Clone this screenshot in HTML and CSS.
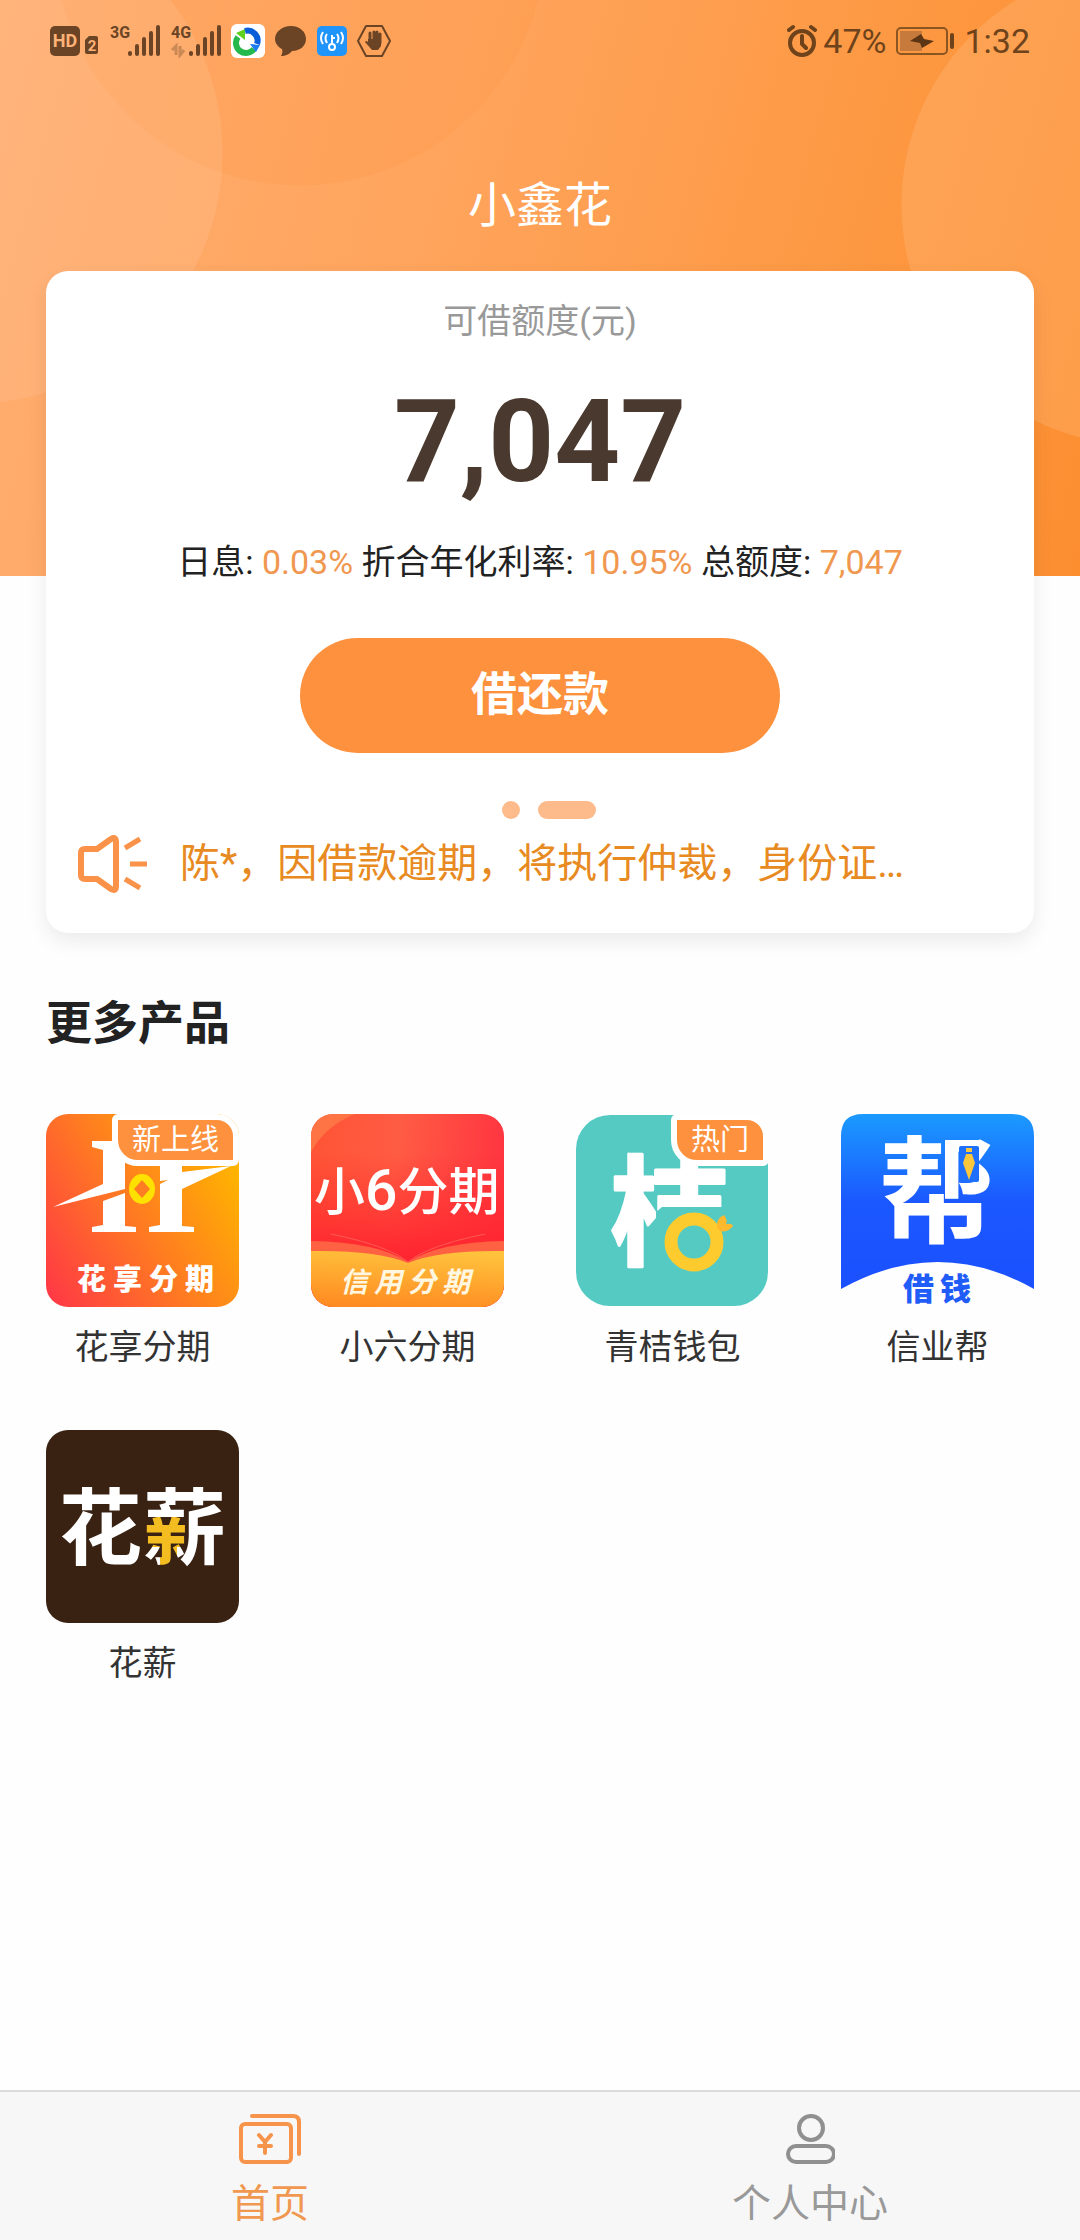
FILE: index.html
```html
<!DOCTYPE html>
<html lang="zh-CN">
<head>
<meta charset="utf-8">
<meta name="viewport" content="width=device-width, initial-scale=1">
<title>小鑫花</title>
<link rel="stylesheet" href="styles.css">
</head>
<body>
<div class="page">
  <div class="status">
    <div class="status-group">
      <svg width="50" height="34" viewBox="0 0 50 34" fill="#6a4424">
        <rect x="0" y="2" width="30" height="30" rx="5"/>
        <text class="glyph-bold" x="15" y="23" font-size="18" text-anchor="middle" fill="#ffb277">HD</text>
        <path d="M39 12h7q2 0 2 2v14q0 2-2 2H37q-2 0-2-2V16z"/>
        <text class="glyph-bold" x="42" y="27" font-size="15" text-anchor="middle" fill="#ffb277">2</text>
      </svg>
      <svg width="51" height="34" viewBox="0 0 51 34" fill="#6a4424" stroke="#6a4424">
        <text class="glyph-bold" x="0" y="14" font-size="16" stroke="none">3G</text>
        <path d="M20 29v1M27 22v8M34 15v15M41 9v21M48 3v27" stroke-width="4" stroke-linecap="round"/>
      </svg>
      <svg width="50" height="34" viewBox="0 0 50 34" fill="#6a4424" stroke="#6a4424">
        <text class="glyph-bold" x="0" y="14" font-size="16" stroke="none">4G</text>
        <path d="M20 29v1M27 22v8M34 15v15M41 9v21M48 3v27" stroke-width="4" stroke-linecap="round"/>
        <path d="M1 26l4-4v9M9 22v9l4-5" fill="none" stroke-width="3" opacity=".35"/>
      </svg>
      <svg width="34" height="34" viewBox="0 0 34 34">
        <rect width="34" height="34" rx="6" fill="#fff"/>
        <path d="M7 13a10 10 0 0 0 16 12" fill="none" stroke="#25b84c" stroke-width="6"/>
        <path d="M5 9l9-4v11z" fill="#5fd01e"/>
        <path d="M14 7a10 10 0 0 1 12 13" fill="none" stroke="#0a5fd8" stroke-width="6"/>
        <path d="M19 20l10 1-4 7z" fill="#1b7cf0"/>
      </svg>
      <svg width="32" height="34" viewBox="0 0 32 34">
        <path d="M16 2c9 0 15 6 15 13s-6 12-14 12c-2 3-7 5-11 5 1-2 2-4 1-7C3 23 0 19 0 15 0 8 7 2 16 2z" fill="#6a4424"/>
      </svg>
      <svg width="30" height="34" viewBox="0 0 30 34" fill="none" stroke="#fff" stroke-width="2">
        <rect y="2" width="30" height="30" rx="5" fill="#1f94fb" stroke="none"/>
        <circle cx="15" cy="23" r="3"/><path d="M15 20v-9M15 14h3M10 10q-3 4 0 9M20 10q3 4 0 9M6 8q-4 6 0 12M24 8q4 6 0 12"/>
      </svg>
      <svg width="34" height="34" viewBox="0 0 34 34" stroke="#6a4424" fill="none">
        <path d="M9 2h16l8 15-8 15H9L1 17z" stroke-width="2" stroke-linejoin="round"/>
        <path d="M13 18V9M17 18V8M20 18V8M23 19v-9" stroke-width="3" stroke-linecap="round"/>
        <path d="M11 15h13v7l-3 4h-6l-7-8q1-2 3 0z" fill="#6a4424" stroke="none"/>
      </svg>
    </div>
    <div class="status-group status-right">
      <svg width="30" height="34" viewBox="0 0 30 34" fill="none" stroke="#6e431b" stroke-width="4" stroke-linecap="round">
        <circle cx="15" cy="19" r="12"/><path d="M15 12v8l4 4M2 6l4-3M28 6l-4-3"/>
      </svg>
      <span>47%</span>
      <svg class="battery" width="58" height="34" viewBox="0 0 58 34" fill="none" stroke="#8a5520" stroke-width="2">
        <rect x="1" y="4" width="50" height="26" rx="4"/>
        <rect x="4" y="7" width="22" height="20" fill="#c67a3c" stroke="none"/>
        <path d="M14 17l11-7 3 5 10 2-12 7-2-5z" fill="#5c3515" stroke="none"/>
        <path d="M56 11v12" stroke="#6e431b" stroke-width="4" stroke-linecap="round"/>
      </svg>
      <span>1:32</span>
    </div>
  </div>

  <h1 class="title">小鑫花</h1>

  <main class="content">
    <section class="card">
      <p class="quota-label">可借额度(元)</p>
      <p class="quota">7,047</p>
      <p class="rates">日息: <em>0.03%</em> 折合年化利率: <em>10.95%</em> 总额度: <em>7,047</em></p>
      <button class="loan" type="button">借还款</button>
      <div class="dots"><i class="dot"></i><i class="dot dot-wide"></i></div>
      <div class="notice">
        <svg width="70" height="60" viewBox="0 0 70 60" fill="none" stroke="#fa9249" stroke-width="6">
          <path d="M7 15h12L33 5q5-3 5 3v44q0 6-5 3L19 45H7q-4 0-4-4V19q0-4 4-4z" stroke-linejoin="round"/>
          <path d="M47 14l15-9M52 30h17M47 45l15 9" stroke-width="5"/>
        </svg>
        <p>陈*，因借款逾期，将执行仲裁，身份证…</p>
      </div>
    </section>

    <h2 class="section-title">更多产品</h2>

    <div class="products">
      <a class="product" href="#huaxiang">
        <span class="logo">
          <svg viewBox="0 0 193 193">
            <defs>
              <linearGradient id="g1" x1="0" y1=".9" x2="1" y2=".3"><stop offset="0" stop-color="#ff3a44"/><stop offset=".5" stop-color="#ff7a22"/><stop offset="1" stop-color="#ffb400"/></linearGradient>
            </defs>
            <rect width="193" height="193" rx="22" fill="url(#g1)"/>
            <g fill="#fff">
              <path d="M46 27h33v48L7 93l50-23V36l-11-3z"/>
              <path d="M57 87l22-8v33l11 1v5H46v-5l11-2z"/>
              <path d="M114 27h34v6l-12 4v21l49-6-49 23v37l12 1v5h-45v-5l11-2V70l8-4-8 1z"/>
            </g>
            <ellipse cx="96" cy="75" rx="13" ry="15" fill="#ffe100"/>
            <path d="M96 66l8 9-8 9-8-9z" fill="#ff7d22"/>
            <text class="glyph-black" font-size="29" x="31 67 103 139" y="176" fill="#fff">花享分期</text>
          </svg>
          <b class="badge">新上线</b>
        </span>
        <span class="name">花享分期</span>
      </a>
      <a class="product" href="#xiaoliu">
        <span class="logo">
          <svg viewBox="0 0 193 193">
            <defs>
              <linearGradient id="g2" x1="0" y1=".1" x2="1" y2=".2"><stop offset="0" stop-color="#ff5435"/><stop offset=".45" stop-color="#ff5c44"/><stop offset="1" stop-color="#ff3540"/></linearGradient>
              <linearGradient id="g2s" x1="0" y1="0" x2="0" y2="1"><stop offset=".2" stop-color="#ff2a2a" stop-opacity="0"/><stop offset=".75" stop-color="#ff2430"/></linearGradient>
              <linearGradient id="g2b" x1=".6" y1="0" x2=".4" y2="1"><stop offset="0" stop-color="#ffc23c"/><stop offset="1" stop-color="#ff8c22"/></linearGradient>
              <clipPath id="c2"><rect width="193" height="193" rx="22"/></clipPath>
            </defs>
            <g clip-path="url(#c2)">
              <rect width="193" height="193" fill="url(#g2)"/>
              <rect width="193" height="193" fill="url(#g2s)"/>
              <path d="M0 38Q14 12 44 0H0z" fill="#ff7444"/>
              <path d="M0 127Q66 128 97 148Q128 128 193 127V160H0z" fill="#ff6242"/>
              <path d="M20 120Q78 132 97 148Q116 132 174 120" fill="none" stroke="#ff5a50" stroke-width="1"/>
              <path d="M0 137Q66 136 97 149Q128 136 193 137V193H0z" fill="url(#g2b)"/>
            </g>
            <text class="glyph-medium" font-size="51" x="3" y="96" fill="#fff">小<tspan font-size="57">6</tspan>分期</text>
            <text class="glyph-bold glyph-italic" font-size="28" x="29 63 97 131" y="178" fill="#fff7e0">信用分期</text>
          </svg>
        </span>
        <span class="name">小六分期</span>
      </a>
      <a class="product" href="#qingju">
        <span class="logo">
          <svg viewBox="0 0 193 193">
            <rect y="1" width="192" height="191" rx="34" fill="#55cac3"/>
            <text class="glyph-bold" font-size="119" x="34" y="142" fill="#fff" stroke="#fff" stroke-width="3" stroke-linejoin="round">桔</text>
            <path d="M86 93h72v70H80V98z" fill="#55cac3"/>
            <circle cx="118" cy="128" r="23" fill="none" stroke="#fecb2f" stroke-width="13"/>
            <path d="M141 114q-1-10 7-13 4 5 2 9 6-1 7 2-5 7-13 5z" fill="#feb92f"/>
          </svg>
          <b class="badge">热门</b>
        </span>
        <span class="name">青桔钱包</span>
      </a>
      <a class="product" href="#xinyebang">
        <span class="logo">
          <svg viewBox="0 0 193 193">
            <defs>
              <linearGradient id="g4" x1="0" y1="0" x2="0" y2="1"><stop offset="0" stop-color="#1b9aff"/><stop offset=".5" stop-color="#1b58ff"/><stop offset="1" stop-color="#1b50ff"/></linearGradient>
            </defs>
            <path d="M0 22Q0 0 22 0H171Q193 0 193 22V175Q97 121 0 175z" fill="url(#g4)"/>
            <text class="glyph-bold" font-size="116" x="38" y="120" fill="#fff">帮</text>
            <rect x="118" y="32" width="20" height="36" rx="2" fill="#1d6ffc"/>
            <path d="M125 34h6v4h-6zM125 40h6l3 9-6 17-6-17z" fill="#f9c63c"/>
            <text class="glyph-black" font-size="31" x="62 99" y="186" fill="#1f5cf8">借钱</text>
          </svg>
        </span>
        <span class="name">信业帮</span>
      </a>
      <a class="product" href="#huaxin">
        <span class="logo">
          <svg viewBox="0 0 193 193">
            <defs>
              <pattern id="p5" width="193" height="193" patternUnits="userSpaceOnUse">
                <rect width="193" height="193" fill="#fff"/>
                <path d="M99 87h42v30h-10v24h-17v-24H99z" fill="#f3bd22"/>
              </pattern>
            </defs>
            <rect width="193" height="193" rx="22" fill="#3a2213"/>
            <text class="glyph-bold" font-size="83" x="13 97" y="128" fill="url(#p5)">花薪</text>
          </svg>
        </span>
        <span class="name">花薪</span>
      </a>
    </div>
  </main>

  <nav class="tabs">
    <a class="tab tab-active" href="#home">
      <svg width="62" height="50" viewBox="0 0 62 50" fill="none" stroke="#f7944b" stroke-width="4" stroke-linecap="round" stroke-linejoin="round">
        <rect x="2" y="10" width="50" height="38" rx="4"/>
        <path d="M13 2h41q6 0 6 6v32M20 21l6 7 6-7M26 28v11M20 32h12"/>
      </svg>
      <span>首页</span>
    </a>
    <a class="tab" href="#profile">
      <svg width="50" height="50" viewBox="0 0 50 50" fill="none" stroke="#909090" stroke-width="4">
        <circle cx="26" cy="14" r="12"/><rect x="3" y="32" width="46" height="16" rx="8"/>
      </svg>
      <span>个人中心</span>
    </a>
  </nav>
</div>
</body>
</html>
```

FILE: styles.css
```css
* {
  box-sizing: border-box;
}

body,
h1,
h2,
p {
  margin: 0;
}

body {
  background: #fefefe;
  color: #333;
  font-family: Roboto, "Noto Sans CJK SC", sans-serif;
}

a {
  color: inherit;
  text-decoration: none;
}

.page {
  display: flex;
  flex-direction: column;
  min-height: 100vh;
  background-image:
    radial-gradient(circle at calc(100% + 62px) 205px, rgba(255, 190, 130, 0.3) 240px, transparent 241px),
    radial-gradient(circle at -28px 153px, rgba(255, 200, 155, 0.22) 250px, transparent 251px),
    radial-gradient(circle at 300px -60px, rgba(252, 146, 62, 0.2) 245px, transparent 246px),
    linear-gradient(105deg, #ffae72 0%, #ffa45c 40%, #fd9944 72%, #fc8e30 100%);
  background-repeat: no-repeat;
  background-size: 100% 576px;
}

.status {
  display: flex;
  align-items: center;
  justify-content: space-between;
  height: 82px;
  padding: 0 50px;
}

.status-group {
  display: flex;
  align-items: center;
  gap: 10px;
}

.status-right {
  gap: 6px;
  color: #6e431b;
  font-size: 34px;
  line-height: 40px;
}

.battery {
  margin: 0 4px;
}

.glyph-medium {
  font-family: Roboto, "Noto Sans CJK SC", sans-serif;
  font-weight: 500;
}

.glyph-bold {
  font-family: Roboto, "Noto Sans CJK SC", sans-serif;
  font-weight: 700;
}

.glyph-black {
  font-family: "Noto Sans CJK SC", sans-serif;
  font-weight: 900;
}

.glyph-italic {
  font-style: italic;
}

.title {
  margin: 92px 0 33px;
  color: #fff;
  font-size: 48px;
  font-weight: 400;
  line-height: 64px;
  text-align: center;
}

.content {
  padding: 0 46px;
}

.card {
  display: flex;
  flex-direction: column;
  align-items: center;
  padding: 26px 32px 39px;
  border-radius: 22px;
  background: #fff;
  box-shadow: 0 8px 20px rgba(0, 0, 0, 0.08);
}

.quota-label {
  color: #999;
  font-size: 34px;
  line-height: 48px;
}

.quota {
  margin: 29px 0 28px;
  color: #4a392e;
  font-size: 115px;
  font-weight: 700;
  line-height: 136px;
}

.rates {
  color: #222;
  font-size: 34px;
  line-height: 48px;
}

.rates em {
  color: #f09750;
  font-style: normal;
}

.loan {
  width: 480px;
  max-width: 100%;
  height: 115px;
  margin: 52px 0 48px;
  padding: 0 0 12px;
  border: 0;
  border-radius: 58px;
  background: #fd913d;
  color: #fff;
  font-family: inherit;
  font-size: 46px;
  font-weight: 700;
}

.dots {
  display: flex;
  gap: 18px;
  padding-left: 18px;
}

.dot {
  width: 18px;
  height: 18px;
  border-radius: 9px;
  background: #fdbb8c;
}

.dot-wide {
  width: 58px;
}

.notice {
  display: flex;
  align-items: center;
  align-self: stretch;
  gap: 32px;
  margin-top: 15px;
  color: #e88a22;
  font-size: 40px;
  line-height: 60px;
}

.section-title {
  margin: 58px 0 59px;
  color: #222;
  font-size: 46px;
  line-height: 64px;
}

.products {
  display: grid;
  grid-template-columns: repeat(4, 193px);
  justify-content: space-between;
  row-gap: 59px;
}

.product {
  display: flex;
  flex-direction: column;
  gap: 16px;
  font-size: 34px;
  line-height: 48px;
  text-align: center;
}

.logo {
  position: relative;
}

.logo svg {
  display: block;
  width: 100%;
}

.badge {
  position: absolute;
  top: 0;
  right: 0;
  padding: 0 14px;
  border: 6px solid #fff;
  border-radius: 6px 22px 6px 26px;
  background: #fd913d;
  color: #fff;
  font-size: 29px;
  font-weight: 400;
  line-height: 40px;
}

.tabs {
  position: sticky;
  bottom: 0;
  display: flex;
  margin-top: auto;
  border-top: 2px solid #dcdcdc;
  background: #f7f7f7;
}

.tab {
  display: flex;
  flex: 1;
  flex-direction: column;
  align-items: center;
  gap: 14px;
  padding: 22px 0 10px;
  color: #999;
  font-size: 39px;
  line-height: 52px;
}

.tab-active {
  color: #f09750;
}
```
